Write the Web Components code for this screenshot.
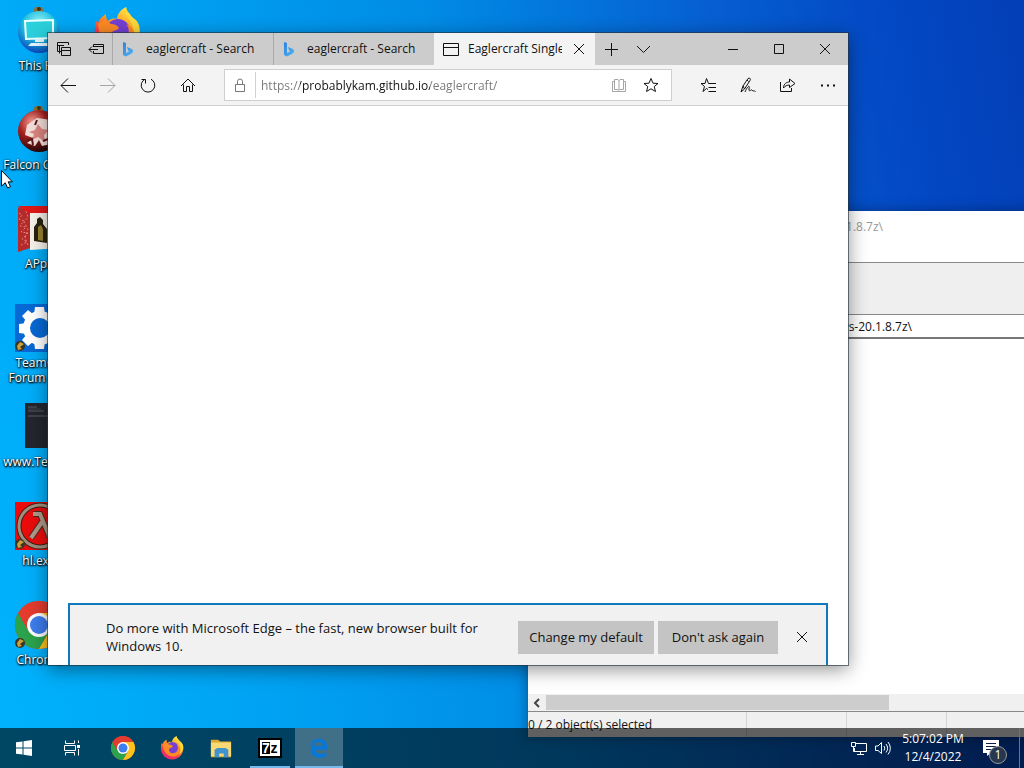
<!DOCTYPE html>
<html lang="en">
<head>
<meta charset="utf-8">
<meta name="viewport" content="width=device-width, initial-scale=1">
<title>Desktop</title>
<style>
  html, body {
    height: 100%;
    margin: 0;
    overflow: hidden;
  }

  body {
    font-family: "Open Sans", "Noto Sans", sans-serif;
    font-size: 12px;
    color: #111;
  }
</style>
</head>
<body>
<win-desktop></win-desktop>

<script>
const CHROME = `
  <circle cx="24" cy="24" r="24" fill="#e33b2e"/>
  <path d="M3.2 12A24 24 0 0 0 24 48L34.4 30H24L13.6 30Z" fill="#2ba24c"/>
  <path d="M24 48A24 24 0 0 0 44.8 12H24L34.4 30Z" fill="#fcc31e"/>
  <path d="M3.2 12A24 24 0 0 1 44.8 12H24L13.6 30Z" fill="#e33b2e"/>
  <circle cx="24" cy="24" r="12" fill="#fff"/>
  <circle cx="24" cy="24" r="9" fill="#3d7ded"/>`;

const FIREFOX = `
  <defs>
    <linearGradient id="fx" x1=".8" y1="0" x2=".2" y2="1">
      <stop offset="0" stop-color="#fff04a"/><stop offset=".4" stop-color="#ff9a20"/>
      <stop offset=".7" stop-color="#fb3b4e"/><stop offset="1" stop-color="#e0208a"/>
    </linearGradient>
  </defs>
  <path d="M46 20C44 13 39 11 37 7C34 4 33 2 33 0C27 3 24 8 24 12C20 11 17 12 15 14C13 12 13 9 13 7C8 10 6 13 5 16L3 14C2 17 2 19 2 21C0 33 9 47 24 47C39 47 49 33 46 20Z" fill="url(#fx)"/>
  <circle cx="25" cy="24" r="12" fill="#7440d6"/>
  <path d="M5 17C10 12 14 14 18 17C22 17 25 19 26 21C24 24 20 23 18 26C17 32 24 37 31 33C37 29 37 21 33 17C42 20 44 31 35 38C24 46 7 38 5 17Z" fill="#ff8b24"/>
  <path d="M33 0C28 8 39 11 40 21C43 28 40 34 37 37C48 31 49 20 43 13C37 9 34 6 33 0Z" fill="#ffd83a"/>`;

const BADGE = `<circle cx="5" cy="42" r="5" fill="#3a3524"/><path d="M2 42L5 38L9 40L5 43L7 45L3 46Z" fill="#c9a23c"/>`;

// [viewBox, markup]; line icons take their stroke from currentColor
const ICONS = {
  pc: ['0 0 48 48', `
    <defs><radialGradient id="pc" cx=".5" cy=".3" r=".75">
      <stop offset="0" stop-color="#9ff6f6"/><stop offset=".5" stop-color="#1fbde0"/><stop offset="1" stop-color="#0636b8"/>
    </radialGradient></defs>
    <path d="M20 0h7l2 5h-11z" fill="#8c7133"/><circle cx="24" cy="2" r="2" fill="#3a3520"/>
    <circle cx="24" cy="25" r="21" fill="url(#pc)"/>
    <path d="M10 14L38 13V31L11 32Z" fill="#2ad0dc" stroke="#eaffff" stroke-width="2"/>
    <path d="M20 32h9v3h-9zM16 36h17l3 3H13z" fill="#e6f6ff"/>`],
  falcon: ['0 0 48 48', `
    <defs><radialGradient id="fa" cx=".35" cy=".3" r=".75">
      <stop offset="0" stop-color="#f6a59a"/><stop offset=".45" stop-color="#a62020"/><stop offset="1" stop-color="#180404"/>
    </radialGradient></defs>
    <path d="M20 0h7l2 5h-11z" fill="#8c7133"/><circle cx="24" cy="2" r="2" fill="#3a3520"/>
    <circle cx="24" cy="25" r="21" fill="url(#fa)"/>
    <path d="M12 19L22 12L36 14L39 23L36 38L27 40L24 34L20 40L12 37L18 32L10 29Z" fill="#f3dfda"/>
    <path d="M14 26L20 24L23 18L27 23L34 24L29 29L30 36L23 31L17 34L19 28Z" fill="#dc8580"/>
    <path d="M12 35L17 33L18 39M22 14L20 19M28 35L33 33" stroke="#5b1718" stroke-width="2" fill="none"/>`],
  apps: ['0 0 48 48', `
    <path d="M3 2L15 6V43L3 47Z" fill="#b52b2c"/>
    <path d="M4 8l3 2-3 4 5 2-4 5 6 1-5 5 7 1-6 6 5 3-6 3M11 6l2 6-4 5 4 7-3 9 3 7" stroke="#e0837a" stroke-dasharray="2 2" fill="none"/>
    <path d="M3 1H46V8H14Z" fill="#e01818"/>
    <path d="M15 8H46V43L15 45Z" fill="#f6f2ea"/>
    <path d="M19 36V22L22 18V14L25 12L28 15V19L32 24V38Z" fill="#29230f"/><path d="M23 35V22L26 20L28 24V36Z" fill="#97812f"/>`],
  team: ['0 0 48 48', `
    <rect width="48" height="48" fill="#0868d4"/>
    <g fill="#fff"><circle cx="25" cy="24" r="17"/>
      <path d="M20 3h9l1 8H19zM20 45h9l1-8H19zM4 20v9l8 1V19zM46 20v9l-8 1V19z"/>
      <path d="M7 12l6-6 6 5-7 7zM43 12l-6-6-6 5 7 7zM7 36l6 6 6-5-7-7zM43 36l-6 6-6-5 7-7z"/></g>
    <circle cx="25" cy="24" r="10" fill="#0868d4"/>${BADGE}`],
  dark: ['0 0 48 48', `
    <rect x="10" y="0" width="38" height="45" fill="#24262e"/>
    <path d="M13 4h9M13 8h16M13 13h31" stroke="#5a5d66"/><path d="M13 6h13" stroke="#3f424b"/>`],
  half: ['0 0 48 48', `
    <rect width="48" height="48" fill="#ea0c0c"/>
    <circle cx="25" cy="24" r="21" fill="none" stroke="#3d201a" stroke-width="5"/>
    <circle cx="25" cy="24" r="21" fill="none" stroke="#a08e7c" stroke-width="3"/>
    <path d="M18 12h7l10 24h6M27 20L16 36" fill="none" stroke="#4b2c22" stroke-width="6"/>
    <path d="M18 12h7l10 24h6M27 20L16 36" fill="none" stroke="#ad9a88" stroke-width="4"/>${BADGE}`],
  chromeLink: ['0 0 48 48', CHROME + BADGE],
  chrome: ['0 0 48 48', CHROME],
  firefox: ['0 0 48 48', FIREFOX],
  bing: ['0 0 16 16', `
    <defs><linearGradient id="bi" x1="0" y1="0" x2="1" y2="1">
      <stop offset="0" stop-color="#2d7fe0"/><stop offset="1" stop-color="#53b8f2"/>
    </linearGradient></defs>
    <path d="M2 1L5 2V12L8 10.500L7 9L6 6L11 8C13 10 12 12 10 13L5 15.500L2 14Z" fill="url(#bi)"/>`],
  tabsAside: ['0 0 16 16', `<path d="M1.500 10.500V1.500H12.500V4M1.500 4.500H8M3.500 12.500V4.500M5.500 6.500H14.500V14.500H5.500ZM5.500 9.500H14.500M1.500 10.500H5"/>`],
  setAside: ['0 0 16 16', `<path d="M5.500 6V3.500H15.500V12.500H5.500V10M5.500 5.500H15.500M1 8.500H10M4 5.500L1 8.500L4 11.500"/>`],
  page: ['0 0 16 16', `<path d="M.5 2.500H15.500V14.500H.5ZM.5 6.500H15.500"/>`],
  close: ['0 0 12 12', `<path d="M1 1L11 11M11 1L1 11"/>`],
  plus: ['0 0 14 14', `<path d="M7.500 1V14M1 7.500H14"/>`],
  chevron: ['0 0 14 14', `<path d="M1 4L7.500 10.500L14 4"/>`],
  minimize: ['0 0 12 12', `<path d="M1 6.500H11"/>`],
  maximize: ['0 0 12 12', `<path d="M1.500 1.500H10.500V10.500H1.500Z"/>`],
  back: ['0 0 16 16', `<path d="M1 8.500H16M8 1.500L1 8.500L8 15.500"/>`],
  forward: ['0 0 16 16', `<path d="M0 8.500H15M8 1.500L15 8.500L8 15.500"/>`],
  reload: ['0 0 16 16', `<path d="M5 2.200A6.800 6.800 0 1 0 11 2.200M1.500 2.500H5.500V6.500"/>`],
  home: ['0 0 16 16', `<path d="M1 9L8 2L15 9M3.500 7.500V14.500H6.500V9.500H9.500V14.500H12.500V7.500"/>`],
  lock: ['0 0 16 16', `<path d="M3.500 7.500H12.500V14.500H3.500ZM5.500 7V4.500A2.500 2.500 0 0 1 10.500 4.500V7"/>`],
  book: ['0 0 16 16', `<path d="M3.500 2.500H7L8 3.500L9 2.500H12.500V12.500H9L8 13.500L7 12.500H3.500ZM8 3V13M3 4.500H1.500V14.500H14.500V4.500H13"/>`],
  star: ['0 0 16 16', `<path d="M8 1.500L10 6.200L15 6.500L11.200 9.600L12.500 14.500L8 11.800L3.500 14.500L4.800 9.600L1 6.500L6 6.200Z"/>`],
  favorites: ['0 0 16 16', `<path d="M8 12.500L6.500 11.500L3 14.500L4.500 9.500L1 6.500H5L6.500 1.500L8.500 6.500H16M8.500 10.500H16M8.500 14.500H16"/>`],
  pen: ['0 0 16 16', `<path d="M1 15L3 9L8 1.500C10 .5 11 2 10 3.500L4.500 12L1 15M3 9L4.500 12M7 3L8.500 4.500M5 15C8 8 10 8 9 12C9 16 11 12 12 13C13 15 14 13 15.500 14.500"/>`],
  share: ['0 0 16 16', `<path d="M.5 5V14.500H11.500V11M3.500 11C3.500 6.500 7 5 9.500 5V2L15 6.500L9.500 10.500V8C7 8 5 9 3.500 11Z"/>`],
  more: ['0 0 16 16', `<path d="M1 8.500H3M7 8.500H9M13 8.500H15" stroke-width="2"/>`],
  scrollLeft: ['0 0 12 12', `<path d="M8 2L4 6L8 10" stroke-width="2"/>`],
  start: ['0 0 16 16', `<path d="M0 2.300L6.500 1.400V7.500H0ZM7.500 1.200L16 0V7.500H7.500ZM0 8.500H6.500V14.600L0 13.700ZM7.500 8.500H16V16L7.500 14.800Z" fill="#fff"/>`],
  taskView: ['0 0 16 16', `<path d="M1.500 .5V3.500H10.500V.5M.5 5.500H11.500V10.500H.5ZM1.500 15.500V12.500H10.500V15.500M14.500 .5V3M14.500 9V15.500"/><path d="M13 5h3v3h-3z" fill="#fff" stroke="none"/>`],
  folder: ['0 0 24 24', `
    <path d="M1 3H9L11 5H23V22H1Z" fill="#e0a92e"/><path d="M1 6H23V21H1Z" fill="#f9d975"/>
    <path d="M5 22V14L8 12H17L20 14V22H15V18H10V22Z" fill="#4193cf"/>`],
  edge: ['0 0 24 24', `<path d="M2 10C4 0 20-2 21 11V14H8C9 20 16 19 20 17V21C12 25 3 22 3 14C3 10 6 7 9 6C7 8 7 9 7 10H16C16 3 6 4 2 10Z" fill="#0878d8"/>`],
  network: ['0 0 16 16', `<path d="M5 3.500H15.500V11.500H3.500V8M9.500 12V14M6 14.500H13M.5 2.500H4.500V6.500H.5ZM2.500 7V11.500H4"/>`],
  sound: ['0 0 16 16', `<path d="M.5 6V10.500H3L6.500 13.500V2.500L3 6ZM9 6A4 4 0 0 1 9 10.500M11 4A6.500 6.500 0 0 1 11 12.500M13 2A9.500 9.500 0 0 1 13 14.500"/>`],
  notes: ['0 0 16 16', `<path d="M0 0H16V13H8L4 16V13H0Z" fill="#fff" stroke="none"/><path d="M3 3.500H13M3 6.500H13M3 9.500H10" stroke="#0a2144"/>`],
  cursor: ['0 0 19 19', `<path d="M.5 .5V17L4.500 13.500L7 19L10 17.500L7.500 12.500H12Z" fill="#fff" stroke="#000"/>`]
};

class AppIcon extends HTMLElement {
  connectedCallback() {
    const [box, body] = ICONS[this.getAttribute('name')];
    const size = this.getAttribute('size') || 16;
    this.attachShadow({ mode: 'open' });
    this.shadowRoot.innerHTML = `
      <style>
        :host { display: inline-flex; flex: none; width: ${size}px; height: ${size}px; }
        svg { width: 100%; height: 100%; overflow: visible; }
      </style>
      <svg viewBox="${box}" fill="none" ${box.endsWith('48 48') ? '' : 'stroke="currentColor"'} aria-hidden="true">${body}</svg>
    `;
    // filled logos carry no outline
    if (['bing', 'start', 'folder', 'edge'].includes(this.getAttribute('name'))) {
      this.shadowRoot.querySelector('svg').setAttribute('stroke', 'none');
    }
  }
}

class DesktopShortcut extends HTMLElement {
  connectedCallback() {
    this.attachShadow({ mode: 'open' });
    this.shadowRoot.innerHTML = `
      <style>
        :host {
          display: flex;
          flex-direction: column;
          align-items: center;
          gap: 3px;
          color: #fff;
          line-height: 15px;
          text-align: center;
          white-space: nowrap;
          text-shadow: 0 1px 2px #000, 1px 1px 2px #000, 0 0 2px rgba(0, 0, 0, .6);
        }
      </style>
      <app-icon name="${this.getAttribute('icon')}" size="48"></app-icon>
      <span><slot></slot></span>
    `;
  }
}

class IconButton extends HTMLElement {
  connectedCallback() {
    this.attachShadow({ mode: 'open' });
    this.shadowRoot.innerHTML = `
      <style>
        :host { display: flex; flex: none; width: 40px; }
        button {
          display: flex;
          flex: 1;
          align-items: center;
          justify-content: center;
          padding: 0;
          border: 0;
          background: none;
          color: inherit;
        }
        button:hover { background: rgba(0, 0, 0, .08); }
      </style>
      <button type="button" aria-label="${this.getAttribute('label')}">
        <app-icon name="${this.getAttribute('icon')}" size="${this.getAttribute('size') || 16}"></app-icon>
      </button>
    `;
  }
}

class BrowserTab extends HTMLElement {
  connectedCallback() {
    const active = this.hasAttribute('active');
    this.attachShadow({ mode: 'open' });
    this.shadowRoot.innerHTML = `
      <style>
        :host {
          display: flex;
          flex: 0 1 161px;
          min-width: 0;
          box-sizing: border-box;
          align-items: center;
          padding-left: 8px;
          border-left: 1px solid #a9a9a9;
        }
        :host([active]) {
          background: #f3f3f3;
          border-color: #f3f3f3;
        }
        .title {
          flex: 1;
          margin-left: 9px;
          overflow: hidden;
          white-space: nowrap;
          line-height: 20px;
        }
        icon-button { width: 33px; align-self: stretch; }
      </style>
      <app-icon name="${this.getAttribute('icon')}"></app-icon>
      <span class="title"><slot></slot></span>
      ${active ? '<icon-button icon="close" size="12" label="Close tab"></icon-button>' : ''}
    `;
  }
}

class DefaultPrompt extends HTMLElement {
  connectedCallback() {
    this.attachShadow({ mode: 'open' });
    this.shadowRoot.innerHTML = `
      <style>
        :host {
          display: flex;
          align-items: center;
          box-sizing: border-box;
          margin: 0 20px;
          padding: 14px 4px 10px 36px;
          border: 2px solid #1079bb;
          border-bottom: 0;
          background: #f1f1f1;
        }
        p {
          flex: 1;
          margin: 0 20px 0 0;
          font-size: 13px;
          line-height: 18px;
        }
        .action {
          height: 33px;
          min-width: 120px;
          margin-right: 4px;
          padding: 0 11px;
          border: 0;
          background: #c4c4c4;
          color: #111;
          font: 13px "Open Sans", "Noto Sans", sans-serif;
          white-space: nowrap;
        }
        icon-button { height: 32px; width: 40px; }
      </style>
      <p><slot></slot></p>
      <button class="action" type="button">Change my default</button>
      <button class="action" type="button">Don't ask again</button>
      <icon-button icon="close" size="12" label="Dismiss"></icon-button>
    `;
  }
}

class BrowserWindow extends HTMLElement {
  connectedCallback() {
    this.attachShadow({ mode: 'open' });
    this.shadowRoot.innerHTML = `
      <style>
        :host {
          display: flex;
          flex-direction: column;
          background: #fff;
          outline: 1px solid rgba(40, 50, 60, .65);
          box-shadow: 0 4px 18px rgba(0, 0, 0, .45);
        }
        .tabs {
          display: flex;
          height: 32px;
          background: #cccccc;
        }
        .tabs icon-button { width: 32px; }
        .tabs .caption { width: 46px; }
        .spring { flex: 1; }
        .bar {
          display: flex;
          height: 40px;
          background: #f3f3f3;
          border-bottom: 1px solid #d0d0d0;
        }
        .disabled { color: #a5a5a5; }
        .address {
          display: flex;
          flex: 1;
          align-items: center;
          margin: 4px 16px;
          padding-right: 4px;
          border: 1px solid #cfcfcf;
          background: #fff;
        }
        .address icon-button { width: 32px; align-self: stretch; }
        .lock { width: 30px; justify-content: center; display: flex; color: #777; }
        input {
          flex: 1;
          min-width: 0;
          height: 26px;
          box-sizing: border-box;
          padding: 0 0 0 5px;
          border: 0;
          border-left: 1px solid #d0d0d0;
          outline: 0;
          font: inherit;
          color: #111;
          /* host part dark, scheme and path grey */
          background: linear-gradient(90deg, #777 44px, #111 44px 174px, #777 174px);
          -webkit-background-clip: text;
          background-clip: text;
          -webkit-text-fill-color: transparent;
        }
        .page { flex: 1; }
      </style>
      <div class="tabs">
        <icon-button icon="tabsAside" label="Tabs you've set aside"></icon-button>
        <icon-button icon="setAside" label="Set these tabs aside"></icon-button>
        <browser-tab icon="bing">eaglercraft - Search</browser-tab>
        <browser-tab icon="bing">eaglercraft - Search</browser-tab>
        <browser-tab icon="page" active>Eaglercraft Singleplayer</browser-tab>
        <icon-button icon="plus" size="14" label="New tab"></icon-button>
        <icon-button icon="chevron" size="14" label="Show tab previews"></icon-button>
        <div class="spring"></div>
        <icon-button class="caption" icon="minimize" size="12" label="Minimize"></icon-button>
        <icon-button class="caption" icon="maximize" size="12" label="Maximize"></icon-button>
        <icon-button class="caption" icon="close" size="12" label="Close"></icon-button>
      </div>
      <div class="bar">
        <icon-button icon="back" label="Back"></icon-button>
        <icon-button class="disabled" icon="forward" label="Forward"></icon-button>
        <icon-button icon="reload" label="Refresh"></icon-button>
        <icon-button icon="home" label="Home"></icon-button>
        <div class="address">
          <span class="lock"><app-icon name="lock"></app-icon></span>
          <input type="text" aria-label="Address" value="https://probablykam.github.io/eaglercraft/" spellcheck="false">
          <icon-button class="disabled" icon="book" label="Reading view"></icon-button>
          <icon-button icon="star" label="Add to favorites"></icon-button>
        </div>
        <icon-button icon="favorites" label="Hub"></icon-button>
        <icon-button icon="pen" label="Add notes"></icon-button>
        <icon-button icon="share" label="Share"></icon-button>
        <icon-button icon="more" label="Settings and more"></icon-button>
      </div>
      <div class="page"></div>
      <default-prompt>Do more with Microsoft Edge – the fast, new browser built for Windows 10.</default-prompt>
    `;
  }
}

class ArchiveWindow extends HTMLElement {
  connectedCallback() {
    this.attachShadow({ mode: 'open' });
    this.shadowRoot.innerHTML = `
      <style>
        :host {
          display: flex;
          flex-direction: column;
          background: #fff;
          border-left: 1px solid #555;
          box-shadow: 0 0 12px rgba(0, 0, 0, .35);
        }
        .title {
          height: 51px;
          box-sizing: border-box;
          width: 355px;
          padding-top: 6px;
          line-height: 20px;
          color: #999;
          text-align: right;
        }
        .tools { height: 51px; background: #efefef; border: solid #888; border-width: 1px 0; }
        .path { height: 22px; border-bottom: 2px solid #777; }
        .path input {
          width: 384px;
          height: 22px;
          padding: 0;
          border: 0;
          outline: 0;
          font: inherit;
          color: #111;
          text-align: right;
          background: none;
        }
        .files { flex: 1; }
        .scroll {
          display: flex;
          align-items: center;
          height: 17px;
          background: #f0f0f0;
          color: #444;
          border-bottom: 1px solid #888;
        }
        .scroll icon-button { width: 18px; }
        .thumb { width: 343px; height: 15px; background: #cdcdcd; }
        .status {
          display: flex;
          height: 25px;
          background: #f0f0f0;
          line-height: 26px;
        }
        .status span { width: 99px; border-right: 1px solid #d4d4d4; }
        .status .count { width: 218px; }
      </style>
      <div class="title">windows-20.1.8.7z\\</div>
      <div class="tools"></div>
      <div class="path"><input type="text" aria-label="Path" value="windows-20.1.8.7z\\"></div>
      <div class="files"></div>
      <div class="scroll">
        <icon-button icon="scrollLeft" size="12" label="Scroll left"></icon-button>
        <div class="thumb"></div>
      </div>
      <div class="status"><span class="count">0 / 2 object(s) selected</span><span></span><span></span></div>
    `;
  }
}

class TaskBar extends HTMLElement {
  connectedCallback() {
    this.attachShadow({ mode: 'open' });
    this.shadowRoot.innerHTML = `
      <style>
        :host {
          display: flex;
          height: 40px;
          background: rgba(0, 0, 0, .6);
          color: #fff;
        }
        icon-button { width: 48px; }
        .apps { display: flex; gap: 1px; margin-left: 3px; flex: 1; }
        .open {
          background: linear-gradient(#76b9ed, #76b9ed) 4px 100% / 40px 2px no-repeat;
        }
        .current {
          background: linear-gradient(#76b9ed, #76b9ed) 0 100% / 100% 2px no-repeat, rgba(255, 255, 255, .25);
        }
        .tray { display: flex; align-items: center; gap: 8px; margin-right: 9px; }
        .clock { align-self: center; width: 66px; line-height: 18px; text-align: center; }
        .notes {
          position: relative;
          display: flex;
          align-items: center;
          width: 40px;
          height: 40px;
          padding-left: 8px;
          box-sizing: border-box;
          margin-left: 9px;
        }
        .count {
          position: absolute;
          left: 14px;
          top: 18px;
          width: 16px;
          height: 16px;
          border: 1px solid #999;
          border-radius: 50%;
          background: #26374f;
          line-height: 16px;
          text-align: center;
        }
        .peek { width: 4px; border-left: 1px solid #66758a; margin-left: 4px; }
      </style>
      <icon-button icon="start" label="Start"></icon-button>
      <icon-button icon="taskView" label="Task View"></icon-button>
      <div class="apps">
        <icon-button icon="chrome" size="24" label="Chrome"></icon-button>
        <icon-button icon="firefox" size="24" label="Firefox"></icon-button>
        <icon-button icon="folder" size="22" label="File Explorer"></icon-button>
        <seven-zip class="open"></seven-zip>
        <icon-button class="current" icon="edge" size="22" label="Microsoft Edge"></icon-button>
      </div>
      <div class="tray">
        <app-icon name="network"></app-icon>
        <app-icon name="sound"></app-icon>
      </div>
      <div class="clock"><div>5:07:02 PM</div><div>12/4/2022</div></div>
      <div class="notes"><app-icon name="notes"></app-icon><span class="count">1</span></div>
      <div class="peek"></div>
    `;
  }
}

class SevenZip extends HTMLElement {
  connectedCallback() {
    this.attachShadow({ mode: 'open' });
    this.shadowRoot.innerHTML = `
      <style>
        :host { display: flex; width: 48px; align-items: center; justify-content: center; }
        button {
          display: flex;
          width: 24px;
          height: 20px;
          box-sizing: border-box;
          padding: 2px;
          border: 2px solid #000;
          background: #fff;
          color: #000;
          font: bold 14px/12px "Liberation Sans", sans-serif;
        }
        b { flex: 1; text-align: center; }
        b:first-child { background: #000; color: #fff; }
      </style>
      <button type="button" aria-label="7-Zip File Manager"><b>7</b><b>z</b></button>
    `;
  }
}

class WinDesktop extends HTMLElement {
  connectedCallback() {
    this.attachShadow({ mode: 'open' });
    this.shadowRoot.innerHTML = `
      <style>
        :host {
          display: block;
          position: relative;
          height: 100vh;
          overflow: hidden;
          background: linear-gradient(80deg, #00b2fb 0%, #00a4f4 22%, #008ce6 48%, #0660d2 72%, #0348c4 88%, #033fb6 100%);
        }
        .shortcuts {
          display: grid;
          grid-auto-flow: column;
          grid-template-rows: repeat(7, 99px);
          grid-auto-columns: 78px;
          justify-content: start;
          padding-top: 7px;
        }
        archive-window { position: absolute; left: 527px; top: 211px; right: -40px; bottom: 31px; }
        browser-window { position: absolute; left: 48px; top: 33px; right: 176px; bottom: 103px; }
        task-bar { position: absolute; left: 0; right: 0; bottom: 0; }
        .pointer { position: absolute; left: 1px; top: 170px; }
      </style>
      <div class="shortcuts">
        <desktop-shortcut icon="pc">This PC</desktop-shortcut>
        <desktop-shortcut icon="falcon">Falcon Client</desktop-shortcut>
        <desktop-shortcut icon="apps">APps</desktop-shortcut>
        <desktop-shortcut icon="team">TeamOS<br>Forum - Yo</desktop-shortcut>
        <desktop-shortcut icon="dark">www.TeamO</desktop-shortcut>
        <desktop-shortcut icon="half">hl.exe</desktop-shortcut>
        <desktop-shortcut icon="chromeLink">Chrome</desktop-shortcut>
        <desktop-shortcut icon="firefox"></desktop-shortcut>
      </div>
      <archive-window></archive-window>
      <browser-window></browser-window>
      <task-bar></task-bar>
      <app-icon class="pointer" name="cursor" size="18"></app-icon>
    `;
  }
}

customElements.define('app-icon', AppIcon);
customElements.define('desktop-shortcut', DesktopShortcut);
customElements.define('icon-button', IconButton);
customElements.define('browser-tab', BrowserTab);
customElements.define('default-prompt', DefaultPrompt);
customElements.define('browser-window', BrowserWindow);
customElements.define('archive-window', ArchiveWindow);
customElements.define('seven-zip', SevenZip);
customElements.define('task-bar', TaskBar);
customElements.define('win-desktop', WinDesktop);
</script>
</body>
</html>
